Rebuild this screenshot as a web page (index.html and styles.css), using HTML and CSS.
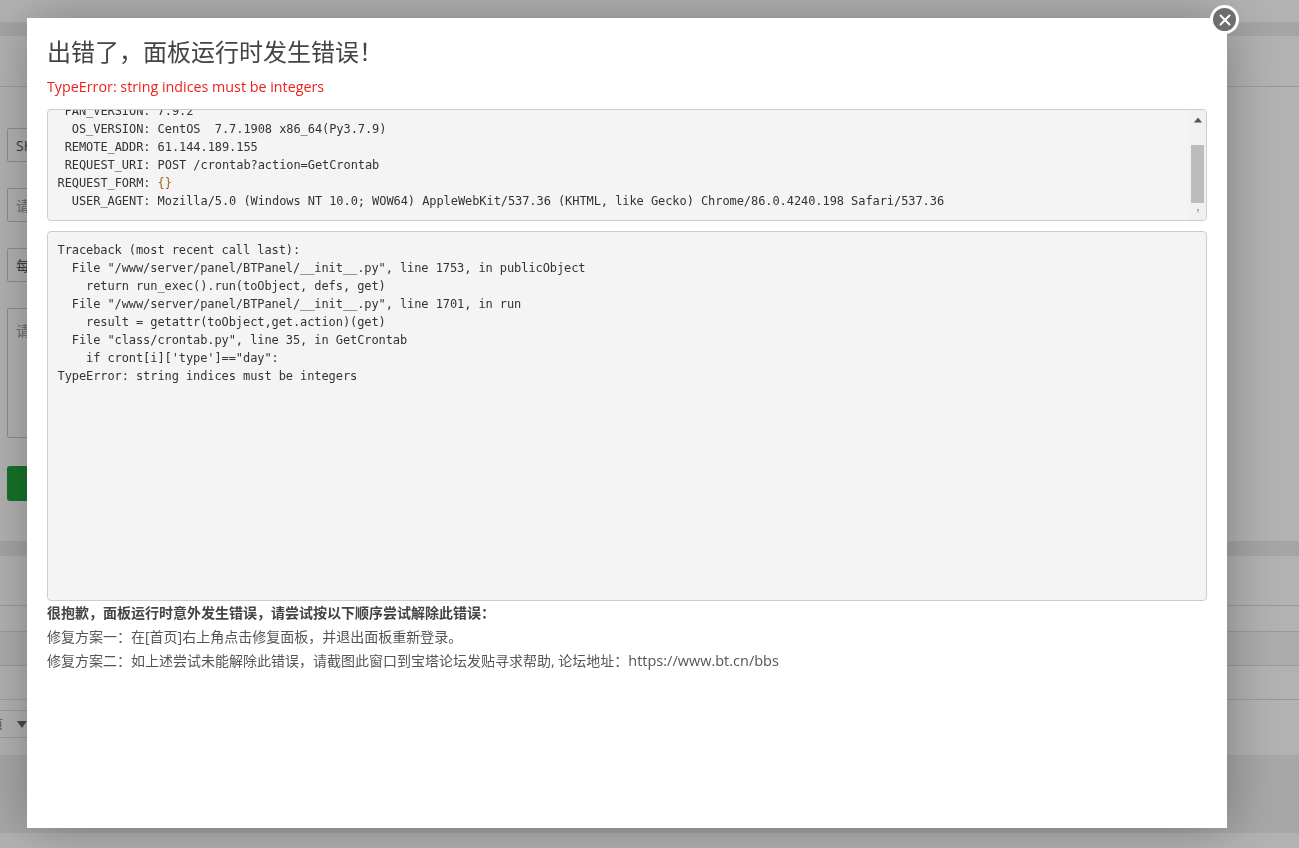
FILE: index.html
```html
<!DOCTYPE html>
<html lang="zh-CN">
<head>
<meta charset="utf-8">
<title>出错了</title>
<link rel="stylesheet" href="styles.css">
</head>
<body>
<div class="page">
  <div class="gap-top"></div>
  <section class="form-panel">
    <div class="panel-head"></div>
    <div class="form-body">
      <div class="field">SH</div>
      <div class="field ghost">请</div>
      <div class="field">每</div>
      <div class="field area ghost">请</div>
      <div class="go"></div>
    </div>
  </section>
  <div class="gap-mid"></div>
  <section class="list-panel">
    <div class="row r1"></div>
    <div class="row r2"></div>
    <div class="row r3"></div>
    <div class="row r4"></div>
    <div class="pager"><span class="pager-text">页</span><span class="pager-arrow"></span></div>
  </section>
  <div class="gap-bottom"></div>
  <div class="page-foot"></div>
</div>
<div class="shade"></div>
<div class="modal">
  <h1 class="title">出错了，面板运行时发生错误！</h1>
  <p class="err">TypeError: string indices must be integers</p>
  <div class="pre-box info">
    <pre class="code info-code"> PAN_VERSION: 7.9.2
  OS_VERSION: CentOS  7.7.1908 x86_64(Py3.7.9)
 REMOTE_ADDR: 61.144.189.155
 REQUEST_URI: POST /crontab?action=GetCrontab
REQUEST_FORM: <span class="brace">{}</span>
  USER_AGENT: Mozilla/5.0 (Windows NT 10.0; WOW64) AppleWebKit/537.36 (KHTML, like Gecko) Chrome/86.0.4240.198 Safari/537.36</pre>
    <div class="scrollbar">
      <svg class="sb-up" width="8" height="6" viewBox="0 0 8 6"><path d="M4 0.5 L8 5.5 L0 5.5 Z" fill="#555"/></svg>
      <div class="sb-thumb"></div>
      <svg class="sb-down" width="4" height="6" viewBox="0 0 4 6"><path d="M2 5.5 L3 1 L1 1 Z" fill="#999"/></svg>
    </div>
  </div>
  <div class="pre-box trace">
    <pre class="code">Traceback (most recent call last):
  File "/www/server/panel/BTPanel/__init__.py", line 1753, in publicObject
    return run_exec().run(toObject, defs, get)
  File "/www/server/panel/BTPanel/__init__.py", line 1701, in run
    result = getattr(toObject,get.action)(get)
  File "class/crontab.py", line 35, in GetCrontab
    if cront[i]['type']=="day":
TypeError: string indices must be integers</pre>
  </div>
  <div class="help">
    <p class="help-strong">很抱歉，面板运行时意外发生错误，请尝试按以下顺序尝试解除此错误：</p>
    <p>修复方案一：在[首页]右上角点击修复面板，并退出面板重新登录。</p>
    <p>修复方案二：如上述尝试未能解除此错误，请截图此窗口到宝塔论坛发贴寻求帮助, 论坛地址：<span class="url">https://www.bt.cn/bbs</span></p>
  </div>
  <button class="close" aria-label="关闭">
    <svg width="14" height="14" viewBox="0 0 14 14"><path d="M2.5 2.5 L11.5 11.5 M11.5 2.5 L2.5 11.5" stroke="#fff" stroke-width="2" stroke-linecap="round"/></svg>
  </button>
</div>
</body>
</html>
```
FILE: styles.css
```css
* { box-sizing: border-box; }
html, body { margin: 0; height: 100%; overflow: hidden; }
body {
  background: #fff;
  font-family: "Open Sans", "Noto Sans CJK SC", sans-serif;
  color: #444;
}
.page { display: flex; flex-direction: column; height: 848px; }
.gap-top { height: 36px; flex: none; background: linear-gradient(#fff 0 22px, #ececec 22px); }
.form-panel { height: 505px; flex: none; background: #fff; }
.panel-head { height: 51px; border-bottom: 1px solid #ddd; }
.form-body { padding: 41px 0 0 7px; display: flex; flex-direction: column; gap: 26px; }
.field {
  width: 300px; height: 34px;
  border: 1px solid #ccc; border-radius: 2px;
  padding-left: 8px; line-height: 34px;
  font-size: 14px; color: #555;
}
.field.ghost { color: #999; }
.field.area { height: 130px; line-height: 44px; margin-bottom: 2px; }
.go { width: 100px; height: 35px; background: #20a53a; border-radius: 3px; }
.gap-mid { height: 15px; flex: none; background: #ececec; }
.list-panel { height: 199px; flex: none; background: #fff; display: flex; flex-direction: column; }
.row { border-bottom: 1px solid #ddd; }
.r1 { height: 50px; }
.r2 { height: 26px; }
.r3 { height: 34px; background: #f7f7f7; }
.r4 { height: 34px; }
.pager {
  height: 28px; margin-top: 10px; width: 40px;
  border-top: 1px solid #ddd; border-bottom: 1px solid #ddd;
  display: flex; align-items: center; font-size: 12px;
}
.pager-text { width: 17px; margin-left: -9px; flex: none; color: #777; }
.pager-arrow { width: 0; height: 0; margin-left: 9px; border: 5px solid transparent; border-top: 7px solid #666; border-bottom: 0; }
.gap-bottom { height: 78px; flex: none; background: #efefef; }
.page-foot { flex: 1; background: #fff; }

.shade { position: fixed; inset: 0; background: rgba(0, 0, 0, .3); }
.modal {
  position: fixed; left: 27px; top: 18px;
  width: 1200px; height: 810px;
  padding: 0 20px;
  background: #fff;
  box-shadow: 1px 1px 50px rgba(0, 0, 0, .3);
}
.title { margin: 19px 0 0; font-size: 24px; line-height: 30px; font-weight: 400; color: #444; }
.err { margin: 10px 0 0; font-size: 14.3px; line-height: 20px; color: #f01f1f; }
.pre-box {
  position: relative; overflow: hidden;
  background: #f4f4f4;
  border: 1px solid #ccc; border-radius: 4px;
}
.info { height: 112px; margin-top: 12px; }
.trace { height: 370px; margin-top: 10px; }
.code {
  margin: 0; padding: 8.5px 9.5px;
  font-family: "DejaVu Sans Mono", monospace;
  font-size: 12px; letter-spacing: -.09px; line-height: 18px;
  color: #333;
}
.info-code { margin-top: -17px; white-space: pre; letter-spacing: -.075px; }
.brace { color: #a5621f; }
.scrollbar {
  position: absolute; right: 0; top: 0; bottom: 0; width: 17px;
  background: #f1f1f1;
  display: flex; flex-direction: column; align-items: center;
}
.sb-up { margin-top: 7px; flex: none; }
.sb-thumb { width: 13px; height: 58px; margin-top: 22px; background: #bcbcbc; flex: none; }
.sb-down { margin-top: 5px; flex: none; }
.help { font-size: 14px; line-height: 24px; color: #555; }
.help p { margin: 0; }
.help-strong { font-weight: 700; color: #444; }
.url { font-size: 14.5px; }
.close {
  position: absolute; right: -12px; top: -13px;
  width: 29px; height: 29px; padding: 0;
  display: flex; align-items: center; justify-content: center;
  background: #6e6e6e; border: 3px solid #fff; border-radius: 50%;
}
```
